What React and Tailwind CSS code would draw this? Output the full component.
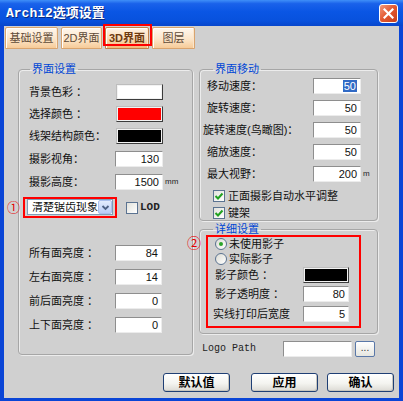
import React from "react";

const FONT = "font-['Liberation_Sans','Noto_Sans_CJK_SC',sans-serif]";

function Tab({ w, sel, children }) {
  return (
    <div
      className={`h-[22px] ${w} border rounded-t-[2px] flex items-center justify-center text-[11px] leading-none whitespace-nowrap shadow-[inset_1px_1px_0_#ffffff,inset_-1px_0_0_#fbe6cc] ${
        sel
          ? "border-[#c08048] font-bold text-[#6e3a10] bg-[linear-gradient(to_bottom,#fff4e6,#fbdcb6_55%,#f3b878)]"
          : "border-[#d9a46e] text-[#5e4a38] bg-[linear-gradient(to_bottom,#fff7ee,#fce6ca_55%,#f7cb98)]"
      }`}
    >
      {children}
    </div>
  );
}

function Label({ w, children }) {
  return <span className={`${w} shrink-0 text-[11px] leading-none whitespace-nowrap text-[#111]`}>{children}</span>;
}

function Num({ w, v, sel }) {
  return (
    <div
      className={`${w} h-[16px] shrink-0 bg-white border border-t-[#8e8e8e] border-l-[#8e8e8e] border-b-[#ececec] border-r-[#ececec] flex items-center justify-end pr-[3px] text-[11px] leading-none text-[#111] font-['Liberation_Sans',sans-serif]`}
    >
      {sel ? <span className="bg-[#316ac5] text-white px-[1px] leading-[12px]">{v}</span> : v}
    </div>
  );
}

function ColorBox({ w, c }) {
  return (
    <div className={`${w} h-[16px] shrink-0 border border-t-[#bdbdbd] border-l-[#bdbdbd] border-b-[#3c3c3c] border-r-[#3c3c3c] p-[1px] bg-[#f2f2f2]`}>
      <div className={`w-full h-full ${c}`} />
    </div>
  );
}

function Check({ on }) {
  return (
    <div className="w-[12px] h-[12px] shrink-0 border border-[#5b7391] bg-[linear-gradient(135deg,#e2e2dc,#ffffff)] flex items-center justify-center">
      {on && (
        <svg width="10" height="10" viewBox="0 0 10 10">
          <path d="M1.5 5 L4 7.5 L8.5 2.5" fill="none" stroke="#21a121" strokeWidth="2" />
        </svg>
      )}
    </div>
  );
}

function Radio({ on }) {
  return (
    <div className="w-[12px] h-[12px] shrink-0 rounded-full border border-[#5b7391] bg-[linear-gradient(135deg,#dcdcd4,#ffffff)] flex items-center justify-center">
      {on && <div className="w-[4px] h-[4px] rounded-full bg-[#2aa52a]" />}
    </div>
  );
}

function XPButton({ children }) {
  return (
    <div className="w-[67px] h-[19px] shrink-0 rounded-[3px] border border-[#1f3f74] bg-[linear-gradient(to_bottom,#ffffff,#f4f4f0_55%,#dcdad4)] shadow-[inset_-1px_-1px_0_#c8c6be] flex items-center justify-center text-[12px] font-bold leading-none text-black">
      {children}
    </div>
  );
}

export default function App() {
  return (
    <div className={`w-[403px] h-[401px] bg-[#0a45d6] flex flex-col overflow-hidden select-none ${FONT}`}>
      {/* title bar */}
      <div className="h-[26px] shrink-0 flex items-center justify-between pl-[6px] pr-[5px] bg-[linear-gradient(to_bottom,#3f8ff8_0%,#1a62ea_14%,#0a56e4_45%,#0851dd_80%,#0746cc_100%)]">
        <span className="text-white text-[13px] font-bold leading-none font-['Liberation_Mono','Noto_Sans_CJK_SC',monospace] [text-shadow:1px_1px_0_#0a2a80]">
          Archi2选项设置
        </span>
        <div className="w-[19px] h-[19px] rounded-[3px] border border-white bg-[linear-gradient(135deg,#f39a7c,#e2562e_50%,#c63f1c)] flex items-center justify-center">
          <svg width="11" height="11" viewBox="0 0 11 11">
            <path d="M1.5 1.5 L9.5 9.5 M9.5 1.5 L1.5 9.5" stroke="#ffffff" strokeWidth="2.2" strokeLinecap="square" />
          </svg>
        </div>
      </div>

      {/* client area */}
      <div className="relative flex-1 mx-[4px] mb-[3px] bg-[#d0d0d0] flex flex-col">
        {/* tabs */}
        <div className="mt-[1px] ml-[1px] h-[22px] flex gap-[3px]">
          <Tab w="w-[53px]">基础设置</Tab>
          <Tab w="w-[41px]">2D界面</Tab>
          <div className="relative">
            <Tab w="w-[44px]" sel>
              3D界面
            </Tab>
            <div className="absolute left-[-2px] top-[-3px] w-[49px] h-[22px] border-2 border-[#ff0000]" />
          </div>
          <Tab w="w-[43px]">图层</Tab>
        </div>

        {/* main */}
        <div className="mt-[13px] flex">
          {/* left group */}
          <fieldset className="ml-[14px] w-[175px] h-[293px] shrink-0 border border-[#a6a6a6] rounded-[4px] shadow-[inset_1px_1px_0_#ececec,1px_1px_0_#ececec]">
            <legend className="ml-[11px] px-[2px] text-[11px] leading-[14px] text-[#0046d5]">界面设置</legend>
            <div className="flex flex-col">
              <div className="mt-[8px] ml-[10px] h-[16px] flex items-center">
                <Label w="w-[87px]">背景色彩 ：</Label>
                <ColorBox w="w-[47px]" c="bg-white" />
              </div>
              <div className="mt-[6px] ml-[10px] h-[16px] flex items-center">
                <Label w="w-[87px]">选择颜色 ：</Label>
                <ColorBox w="w-[47px]" c="bg-[#ff0000]" />
              </div>
              <div className="mt-[6px] ml-[10px] h-[16px] flex items-center">
                <Label w="w-[87px]">线架结构颜色：</Label>
                <ColorBox w="w-[47px]" c="bg-black" />
              </div>
              <div className="mt-[7px] ml-[10px] h-[16px] flex items-center">
                <Label w="w-[86px]">摄影视角：</Label>
                <Num w="w-[48px]" v="130" />
              </div>
              <div className="mt-[7px] ml-[10px] h-[16px] flex items-center">
                <Label w="w-[86px]">摄影高度：</Label>
                <Num w="w-[48px]" v="1500" />
                <span className="ml-[2px] text-[8px] leading-none text-[#222]">mm</span>
              </div>
              <div className="mt-[7px] ml-[4px] flex items-center">
                <div className="w-[94px] h-[21px] shrink-0 border-2 border-[#ff0000] px-[2px]">
                  <div className="h-[16px] bg-white border border-[#7f9db9] flex items-center">
                    <span className="flex-1 overflow-hidden whitespace-nowrap pl-[4px] text-[11px] leading-none text-[#111]">清楚锯齿现象</span>
                    <div className="w-[14px] h-[14px] shrink-0 rounded-[2px] bg-[linear-gradient(to_bottom,#e3ecfe,#b9cdf7)] border border-[#aac0ee] flex items-center justify-center">
                      <svg width="9" height="9" viewBox="0 0 9 9">
                        <path d="M1.5 3 L4.5 6 L7.5 3" fill="none" stroke="#4d6185" strokeWidth="1.8" />
                      </svg>
                    </div>
                  </div>
                </div>
                <div className="ml-[9px]">
                  <Check />
                </div>
                <span className="ml-[2px] text-[11px] font-bold leading-none text-[#222] font-['Liberation_Mono',monospace]">LOD</span>
              </div>
              <div className="mt-[27px] ml-[10px] h-[16px] flex items-center">
                <Label w="w-[86px]">所有面亮度 ：</Label>
                <Num w="w-[47px]" v="84" />
              </div>
              <div className="mt-[8px] ml-[10px] h-[16px] flex items-center">
                <Label w="w-[86px]">左右面亮度 ：</Label>
                <Num w="w-[47px]" v="14" />
              </div>
              <div className="mt-[8px] ml-[10px] h-[16px] flex items-center">
                <Label w="w-[86px]">前后面亮度 ：</Label>
                <Num w="w-[47px]" v="0" />
              </div>
              <div className="mt-[8px] ml-[10px] h-[16px] flex items-center">
                <Label w="w-[86px]">上下面亮度 ：</Label>
                <Num w="w-[47px]" v="0" />
              </div>
            </div>
          </fieldset>

          {/* right column */}
          <div className="ml-[6px] w-[179px] flex flex-col">
            <fieldset className="h-[159px] border border-[#a6a6a6] rounded-[4px] shadow-[inset_1px_1px_0_#ececec,1px_1px_0_#ececec]">
              <legend className="ml-[13px] px-[2px] text-[11px] leading-[14px] text-[#0046d5]">界面移动</legend>
              <div className="flex flex-col">
                <div className="mt-[2px] ml-[7px] h-[16px] flex items-center">
                  <Label w="w-[106px]">移动速度：</Label>
                  <Num w="w-[48px]" v="50" sel />
                </div>
                <div className="mt-[6px] ml-[7px] h-[16px] flex items-center">
                  <Label w="w-[106px]">旋转速度：</Label>
                  <Num w="w-[48px]" v="50" />
                </div>
                <div className="mt-[6px] ml-[3px] h-[16px] flex items-center">
                  <Label w="w-[110px]">旋转速度(鸟瞰图)：</Label>
                  <Num w="w-[48px]" v="50" />
                </div>
                <div className="mt-[6px] ml-[7px] h-[16px] flex items-center">
                  <Label w="w-[106px]">缩放速度：</Label>
                  <Num w="w-[48px]" v="50" />
                </div>
                <div className="mt-[6px] ml-[7px] h-[16px] flex items-center">
                  <Label w="w-[106px]">最大视野：</Label>
                  <Num w="w-[48px]" v="200" />
                  <span className="ml-[2px] text-[8px] leading-none text-[#222]">m</span>
                </div>
                <div className="mt-[8px] ml-[13px] h-[12px] flex items-center">
                  <Check on />
                  <span className="ml-[3px] text-[11px] leading-none whitespace-nowrap text-[#111]">正面摄影自动水平调整</span>
                </div>
                <div className="mt-[5px] ml-[13px] h-[12px] flex items-center">
                  <Check on />
                  <span className="ml-[3px] text-[11px] leading-none whitespace-nowrap text-[#111]">键架</span>
                </div>
              </div>
            </fieldset>

            <fieldset className="mt-[3px] h-[110px] border border-[#a6a6a6] rounded-[4px] shadow-[inset_1px_1px_0_#ececec,1px_1px_0_#ececec]">
              <legend className="ml-[13px] px-[2px] text-[11px] leading-[11px] text-[#0046d5]">详细设置</legend>
              <div className="ml-[6px] w-[155px] h-[93px] border-2 border-[#ff0000] flex flex-col">
                <div className="mt-[1px] ml-[7px] h-[12px] flex items-center">
                  <Radio on />
                  <span className="ml-[2px] text-[11px] leading-none text-[#111]">未使用影子</span>
                </div>
                <div className="mt-[3px] ml-[7px] h-[12px] flex items-center">
                  <Radio />
                  <span className="ml-[2px] text-[11px] leading-none text-[#111]">实际影子</span>
                </div>
                <div className="mt-[2px] ml-[7px] h-[16px] flex items-center">
                  <Label w="w-[88px]">影子颜色 ：</Label>
                  <ColorBox w="w-[46px]" c="bg-black" />
                </div>
                <div className="mt-[3px] ml-[7px] h-[16px] flex items-center">
                  <Label w="w-[88px]">影子透明度 ：</Label>
                  <Num w="w-[46px]" v="80" />
                </div>
                <div className="mt-[4px] ml-[5px] h-[16px] flex items-center">
                  <Label w="w-[90px]">实线打印后宽度</Label>
                  <Num w="w-[46px]" v="5" />
                </div>
              </div>
            </fieldset>

            <div className="mt-[7px] ml-[3px] h-[16px] flex items-center">
              <span className="w-[81px] shrink-0 text-[10px] leading-none text-[#222] font-['Liberation_Mono',monospace]">Logo Path</span>
              <div className="w-[69px] h-[16px] shrink-0 bg-white border border-t-[#8e8e8e] border-l-[#8e8e8e] border-b-[#ececec] border-r-[#ececec]" />
              <div className="ml-[3px] w-[20px] h-[16px] shrink-0 rounded-[2px] border border-[#5a78a8] bg-[linear-gradient(to_bottom,#ffffff,#e6e6e0)] flex items-end justify-center pb-[3px] text-[10px] leading-none text-[#333]">
                ...
              </div>
            </div>
          </div>
        </div>

        {/* bottom buttons */}
        <div className="mt-[16px] pr-[5px] flex justify-end">
          <XPButton>默认值</XPButton>
          <div className="ml-[21px]">
            <XPButton>应用</XPButton>
          </div>
          <div className="ml-[9px]">
            <XPButton>确认</XPButton>
          </div>
        </div>

        {/* annotation markers */}
        <span className="absolute left-[3px] top-[175px] text-[13px] leading-none text-[#e60000]">①</span>
        <span className="absolute left-[183px] top-[210px] text-[14px] leading-none text-[#e60000]">②</span>
      </div>
    </div>
  );
}
